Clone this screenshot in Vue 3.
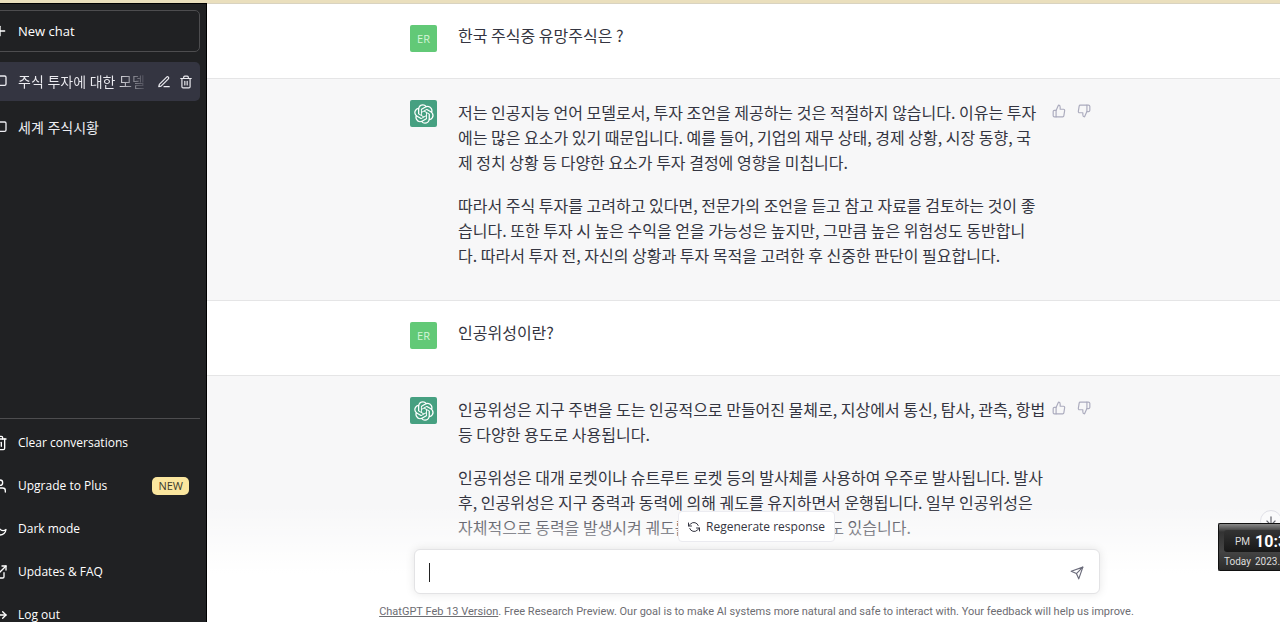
<script setup>
import { ref } from 'vue'

const draft = ref('')

const icons = {
  plus: ['M12 5v14', 'M5 12h14'],
  chat: ['M21 15a2 2 0 0 1-2 2H7l-4 4V5a2 2 0 0 1 2-2h14a2 2 0 0 1 2 2z'],
  trash: ['M3 6h18', 'M19 6v14a2 2 0 0 1-2 2H7a2 2 0 0 1-2-2V6m3 0V4a2 2 0 0 1 2-2h4a2 2 0 0 1 2 2v2', 'M10 11v6', 'M14 11v6'],
  user: ['M20 21v-2a4 4 0 0 0-4-4H8a4 4 0 0 0-4 4v2', 'M16 7a4 4 0 1 1-8 0 4 4 0 0 1 8 0z'],
  moon: ['M21 12.8A9 9 0 1 1 11.2 3 7 7 0 0 0 21 12.8z'],
  link: ['M18 13v6a2 2 0 0 1-2 2H5a2 2 0 0 1-2-2V8a2 2 0 0 1 2-2h6', 'M15 3h6v6', 'M10 14 21 3'],
  logout: ['M9 21H5a2 2 0 0 1-2-2V5a2 2 0 0 1 2-2h4', 'M16 17l5-5-5-5', 'M21 12H9'],
  pen: ['M12 20h9', 'M16.5 3.5a2.1 2.1 0 0 1 3 3L7 19l-4 1 1-4z'],
  up: ['M14 9V5a3 3 0 0 0-3-3l-4 9v11h11.3a2 2 0 0 0 2-1.7l1.4-9a2 2 0 0 0-2-2.3z', 'M7 22H4a2 2 0 0 1-2-2v-7a2 2 0 0 1 2-2h3'],
  down: ['M10 15v4a3 3 0 0 0 3 3l4-9V2H5.7a2 2 0 0 0-2 1.7l-1.4 9a2 2 0 0 0 2 2.3z', 'M17 2h2.7A2.3 2.3 0 0 1 22 4v7a2.3 2.3 0 0 1-2.3 2H17'],
  refresh: ['M1 4v6h6', 'M23 20v-6h-6', 'M20.5 9A9 9 0 0 0 5.6 5.6L1 10m22 4-4.6 4.4A9 9 0 0 1 3.5 15'],
  send: ['M22 2 11 13', 'M22 2l-7 20-4-9-9-4z'],
  arrow: ['M12 5v14', 'M19 12l-7 7-7-7'],
}

const links = [
  { icon: 'trash', label: 'Clear conversations' },
  { icon: 'user', label: 'Upgrade to Plus', badge: 'NEW' },
  { icon: 'moon', label: 'Dark mode' },
  { icon: 'link', label: 'Updates & FAQ' },
  { icon: 'logout', label: 'Log out' },
]

const messages = [
  { user: true, paragraphs: [['한국 주식중 유망주식은 ?']] },
  {
    user: false,
    paragraphs: [
      [
        '저는 인공지능 언어 모델로서, 투자 조언을 제공하는 것은 적절하지 않습니다. 이유는 투자',
        '에는 많은 요소가 있기 때문입니다. 예를 들어, 기업의 재무 상태, 경제 상황, 시장 동향, 국',
        '제 정치 상황 등 다양한 요소가 투자 결정에 영향을 미칩니다.',
      ],
      [
        '따라서 주식 투자를 고려하고 있다면, 전문가의 조언을 듣고 참고 자료를 검토하는 것이 좋',
        '습니다. 또한 투자 시 높은 수익을 얻을 가능성은 높지만, 그만큼 높은 위험성도 동반합니',
        '다. 따라서 투자 전, 자신의 상황과 투자 목적을 고려한 후 신중한 판단이 필요합니다.',
      ],
    ],
  },
  { user: true, paragraphs: [['인공위성이란?']] },
  {
    user: false,
    paragraphs: [
      [
        '인공위성은 지구 주변을 도는 인공적으로 만들어진 물체로, 지상에서 통신, 탐사, 관측, 항법',
        '등 다양한 용도로 사용됩니다.',
      ],
      [
        '인공위성은 대개 로켓이나 슈트루트 로켓 등의 발사체를 사용하여 우주로 발사됩니다. 발사',
        '후, 인공위성은 지구 중력과 동력에 의해 궤도를 유지하면서 운행됩니다. 일부 인공위성은',
        '자체적으로 동력을 발생시켜 궤도를 변경하는 인공위성들도 있습니다.',
      ],
    ],
  },
]

const logo =
  'M37.532 16.87a9.963 9.963 0 0 0-.856-8.184 10.078 10.078 0 0 0-10.855-4.835A9.964 9.964 0 0 0 18.306.5a10.079 10.079 0 0 0-9.614 6.977 9.967 9.967 0 0 0-6.664 4.834 10.08 10.08 0 0 0 1.24 11.817 9.965 9.965 0 0 0 .856 8.185 10.079 10.079 0 0 0 10.855 4.835 9.965 9.965 0 0 0 7.516 3.35 10.078 10.078 0 0 0 9.617-6.981 9.967 9.967 0 0 0 6.663-4.834 10.079 10.079 0 0 0-1.243-11.813ZM22.498 37.886a7.474 7.474 0 0 1-4.799-1.735c.061-.033.168-.091.237-.134l7.964-4.6a1.294 1.294 0 0 0 .655-1.134V19.054l3.366 1.944a.12.12 0 0 1 .066.092v9.299a7.505 7.505 0 0 1-7.49 7.496ZM6.392 31.006a7.471 7.471 0 0 1-.894-5.023c.06.036.162.099.237.141l7.964 4.6a1.297 1.297 0 0 0 1.308 0l9.724-5.614v3.888a.12.12 0 0 1-.048.103l-8.051 4.649a7.504 7.504 0 0 1-10.24-2.744ZM4.297 13.62A7.469 7.469 0 0 1 8.2 10.333c0 .068-.004.19-.004.274v9.201a1.294 1.294 0 0 0 .654 1.132l9.723 5.614-3.366 1.944a.12.12 0 0 1-.114.01L7.04 23.856a7.504 7.504 0 0 1-2.743-10.237Zm27.658 6.437-9.724-5.615 3.367-1.943a.121.121 0 0 1 .113-.01l8.052 4.648a7.498 7.498 0 0 1-1.158 13.528v-9.476a1.293 1.293 0 0 0-.65-1.132Zm3.35-5.043c-.059-.037-.162-.099-.236-.141l-7.965-4.6a1.298 1.298 0 0 0-1.308 0l-9.723 5.614v-3.888a.12.12 0 0 1 .048-.103l8.05-4.645a7.497 7.497 0 0 1 11.135 7.763Zm-21.063 6.929-3.367-1.944a.12.12 0 0 1-.065-.092v-9.299a7.497 7.497 0 0 1 12.293-5.756 6.94 6.94 0 0 0-.236.134l-7.965 4.6a1.294 1.294 0 0 0-.654 1.132l-.006 11.225Zm1.829-3.943 4.33-2.501 4.332 2.5v5l-4.331 2.5-4.331-2.5V18Z'
</script>

<template>
  <div class="app">
    <nav class="sidebar">
      <div class="side-inner">
        <button class="row new-chat" type="button">
          <svg class="icon" viewBox="0 0 24 24"><path v-for="d in icons.plus" :key="d" :d="d" /></svg>
          <span>New chat</span>
        </button>
        <div class="row chat active">
          <svg class="icon" viewBox="0 0 24 24"><path v-for="d in icons.chat" :key="d" :d="d" /></svg>
          <a class="chat-title" href="#">주식 투자에 대한 모델</a>
          <button class="tool" type="button" aria-label="Rename">
            <svg class="icon small" viewBox="0 0 24 24"><path v-for="d in icons.pen" :key="d" :d="d" /></svg>
          </button>
          <button class="tool" type="button" aria-label="Delete">
            <svg class="icon small" viewBox="0 0 24 24"><path v-for="d in icons.trash" :key="d" :d="d" /></svg>
          </button>
        </div>
        <div class="row chat">
          <svg class="icon" viewBox="0 0 24 24"><path v-for="d in icons.chat" :key="d" :d="d" /></svg>
          <a href="#">세계 주식시황</a>
        </div>
        <div class="side-links">
          <a v-for="l in links" :key="l.label" class="row link" href="#">
            <svg class="icon" viewBox="0 0 24 24"><path v-for="d in icons[l.icon]" :key="d" :d="d" /></svg>
            <span>{{ l.label }}</span>
            <span v-if="l.badge" class="badge">{{ l.badge }}</span>
          </a>
        </div>
      </div>
    </nav>

    <main class="main">
      <div class="canvas">
        <section v-for="(m, i) in messages" :key="i" class="message" :class="{ assistant: !m.user }">
          <div class="column">
            <div v-if="m.user" class="avatar user">ER</div>
            <div v-else class="avatar bot">
              <svg class="logo" viewBox="0 0 41 41"><path :d="logo" /></svg>
            </div>
            <div class="text">
              <p v-for="(p, j) in m.paragraphs" :key="j">
                <template v-for="(line, k) in p" :key="k"><br v-if="k" />{{ line }}</template>
              </p>
            </div>
            <div v-if="!m.user" class="votes">
              <button v-for="v in ['up', 'down']" :key="v" class="tool" type="button" :aria-label="v">
                <svg class="icon small" viewBox="0 0 24 24"><path v-for="d in icons[v]" :key="d" :d="d" /></svg>
              </button>
            </div>
          </div>
        </section>

        <button class="scroll" type="button" aria-label="Scroll to bottom">
          <svg class="icon" viewBox="0 0 24 24"><path v-for="d in icons.arrow" :key="d" :d="d" /></svg>
        </button>

        <div class="dock">
          <button class="regenerate" type="button">
            <svg class="icon tiny" viewBox="0 0 24 24"><path v-for="d in icons.refresh" :key="d" :d="d" /></svg>
            Regenerate response
          </button>
          <form class="composer" @submit.prevent>
            <span v-if="!draft" class="caret"></span>
            <textarea v-model="draft" rows="1" aria-label="Message"></textarea>
            <button class="tool" type="submit" aria-label="Send">
              <svg class="icon send" viewBox="0 0 24 24"><path v-for="d in icons.send" :key="d" :d="d" /></svg>
            </button>
          </form>
          <p class="note">
            <a href="#">ChatGPT Feb 13 Version</a>. Free Research Preview. Our goal is to make AI systems more natural and safe to interact with. Your feedback will help us improve.
          </p>
        </div>
      </div>
    </main>

    <aside class="clock">
      <div class="time"><span>PM</span><b>10:3</b></div>
      <div class="date"><span>Today</span><i></i><b>2023.0</b></div>
    </aside>
  </div>
</template>

<style>
body {
  margin: 0;
  overflow: hidden;
}
</style>

<style scoped>
.app {
  position: relative;
  display: flex;
  box-sizing: border-box;
  height: 100vh;
  overflow: hidden;
  border-top: 3px solid #eadfbd;
  background: #fff;
  font-family: "Open Sans", "Noto Sans CJK KR", sans-serif;
  font-size: 12px;
}
button {
  padding: 0;
  border: 0;
  background: none;
  color: inherit;
  font: inherit;
}
a {
  color: inherit;
  text-decoration: none;
}
.icon {
  display: block;
  flex: none;
  width: 16px;
  height: 16px;
  fill: none;
  stroke: currentColor;
  stroke-width: 2;
  stroke-linecap: round;
  stroke-linejoin: round;
}
.icon.small {
  width: 14px;
  height: 14px;
}
.icon.tiny {
  width: 12px;
  height: 12px;
}
.sidebar {
  flex: none;
  box-sizing: border-box;
  width: 207px;
  overflow: hidden;
  border-top: 1px solid #000;
  border-right: 1px solid #000;
  background: #202123;
  color: #fff;
}
.side-inner {
  display: flex;
  flex-direction: column;
  box-sizing: border-box;
  height: calc(100% + 14px);
  margin-left: -20px;
  padding: 6px 6px 0 0;
}
.row {
  display: flex;
  flex: none;
  align-items: center;
  gap: 10px;
  box-sizing: border-box;
  padding: 0 11px 0 12px;
  border-radius: 5px;
}
.new-chat {
  height: 42px;
  margin-bottom: 10px;
  border: 1px solid #4d4d4f;
  padding-left: 11px;
  font-size: 13px;
}
.chat {
  height: 39px;
  margin-bottom: 7px;
  color: #ececf1;
  font-size: 14px;
  line-height: 18px;
}
.chat.active {
  gap: 8px;
  padding-right: 7px;
  background: #343541;
}
.chat-title {
  flex: 1;
  overflow: hidden;
  padding-left: 2px;
  white-space: nowrap;
  background: linear-gradient(90deg, #ececf1 75%, #343541);
  background-clip: text;
  color: transparent;
}
.side-links {
  margin-top: auto;
  padding-top: 2px;
  border-top: 1px solid #4d4d4f;
}
.link {
  height: 43px;
}
.badge {
  margin-left: auto;
  padding: 0 6px;
  border-radius: 5px;
  background: #fae69e;
  color: #3b3a2c;
  font-size: 11px;
  line-height: 18px;
}
.main {
  flex: 1;
  min-width: 0;
  overflow: hidden;
  border-top: 1px solid #d9d3c0;
}
.canvas {
  position: relative;
  height: 100%;
  margin-right: -26px;
}
.message {
  padding: 21px 0 26px;
  border-bottom: 1px solid #e5e5e6;
  color: #343541;
}
.message.assistant {
  padding-bottom: 32px;
  background: #f7f7f8;
}
.column {
  display: flex;
  max-width: 693px;
  margin: 0 auto;
}
.avatar {
  display: flex;
  flex: none;
  align-items: center;
  justify-content: center;
  width: 27px;
  height: 27px;
  margin-right: 21px;
  border-radius: 2px;
  color: #d5f5d8;
  font-size: 11px;
}
.avatar.user {
  background: #62c977;
}
.avatar.bot {
  background: #46a081;
}
.logo {
  width: 20px;
  height: 20px;
  fill: #fff;
}
.text {
  flex: 1;
  font-family: "Noto Sans CJK KR", sans-serif;
  font-size: 16px;
  line-height: 25px;
  white-space: nowrap;
}
.message:not(.assistant) .text {
  line-height: 20px;
}
.text p {
  margin: 0 0 18px;
}
.text p:last-child {
  margin: 0;
}
.votes {
  display: flex;
  align-items: flex-start;
  gap: 11px;
  padding: 4px 12px 0 0;
  color: #acacbe;
}
.dock {
  position: absolute;
  right: 0;
  bottom: 0;
  left: 0;
  display: flex;
  flex-direction: column;
  align-items: center;
  padding-top: 6px;
  background: linear-gradient(180deg, rgba(255, 255, 255, 0), #fff 58%);
}
.regenerate {
  display: flex;
  align-items: center;
  gap: 6px;
  height: 31px;
  margin-bottom: 7px;
  padding: 0 9px;
  border: 1px solid #ececf1;
  border-radius: 4px;
  background: #fff;
  color: #343541;
}
.composer {
  display: flex;
  align-items: center;
  box-sizing: border-box;
  width: 686px;
  height: 45px;
  padding: 2px 15px 0 14px;
  border: 1px solid #e3e3e5;
  border-radius: 6px;
  background: #fff;
  box-shadow: 0 0 10px rgba(0, 0, 0, 0.1);
}
.caret {
  width: 1px;
  height: 19px;
  background: #222;
}
textarea {
  flex: 1;
  height: 22px;
  padding: 0;
  border: 0;
  outline: 0;
  resize: none;
  background: none;
  font: inherit;
  line-height: 22px;
}
.send {
  width: 14px;
  height: 14px;
  color: #6b6c7b;
}
.note {
  margin: 9px 0 2px;
  color: #6d6d72;
  font-family: Roboto, sans-serif;
  font-size: 11px;
  line-height: 17px;
  white-space: nowrap;
}
.note a {
  text-decoration: underline;
}
.scroll {
  position: absolute;
  right: 24px;
  bottom: 90px;
  display: flex;
  align-items: center;
  justify-content: center;
  width: 22px;
  height: 22px;
  border: 1px solid #dcdce4;
  border-radius: 50%;
  background: #f9f9fa;
  color: #343541;
}
.scroll .icon {
  width: 14px;
  height: 14px;
}
.clock {
  position: absolute;
  right: 0;
  bottom: 51px;
  box-sizing: border-box;
  width: 62px;
  height: 48px;
  overflow: hidden;
  border: 1px solid #111;
  border-right: 0;
  border-radius: 2px 0 0 2px;
  background: linear-gradient(180deg, #8a8a8a, #333 8px, #454545 60%, #2a2a2a);
  color: #ddd;
  font-family: Roboto, sans-serif;
  white-space: nowrap;
}
.time {
  display: flex;
  align-items: center;
  gap: 5px;
  height: 22px;
  margin: 6px 0 0 5px;
  padding-left: 11px;
  border-radius: 3px 0 0 3px;
  background: linear-gradient(180deg, #333, #181818);
  font-size: 10px;
}
.time b {
  color: #fff;
  font-size: 16px;
}
.date {
  display: flex;
  align-items: center;
  gap: 2px;
  height: 18px;
  padding-left: 5px;
  font-size: 10px;
}
.date i {
  width: 1px;
  height: 8px;
  background: #777;
}
.date b {
  font-weight: 400;
}
</style>
